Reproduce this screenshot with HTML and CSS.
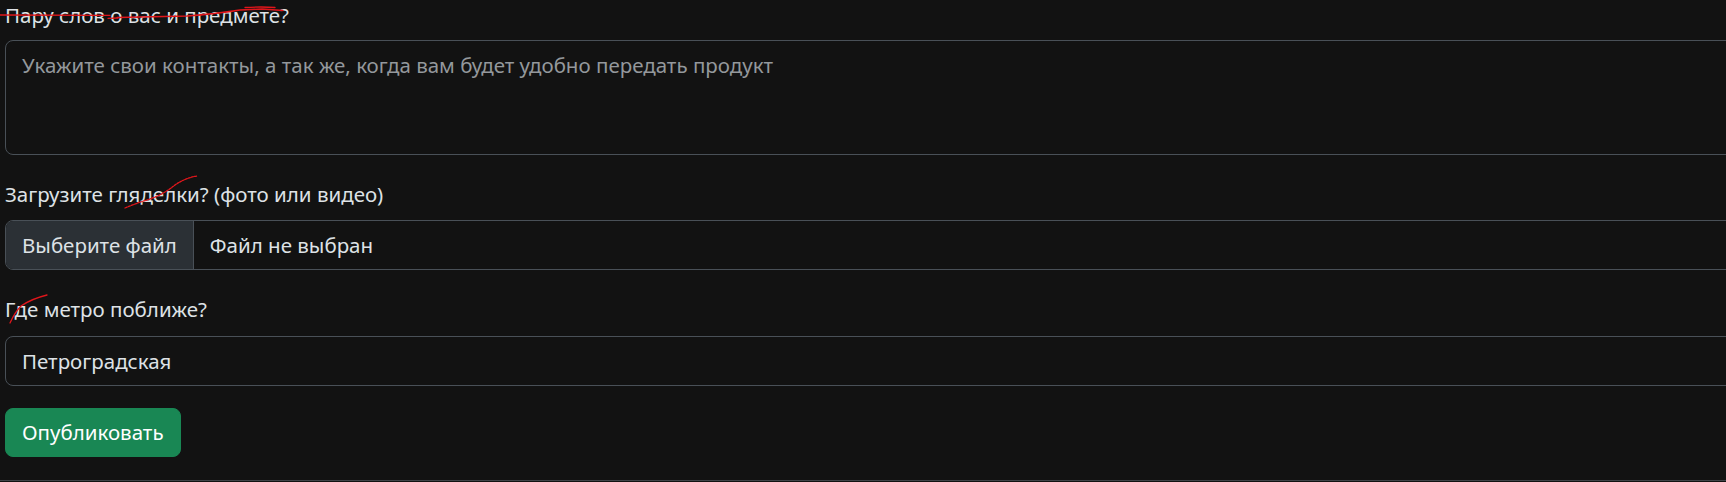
FILE: index.html
```html
<!DOCTYPE html>
<html lang="ru">
<head>
<meta charset="utf-8">
<title>Форма</title>
<link rel="stylesheet" href="styles.css">
</head>
<body>
<form class="form">
  <div class="field field-about">
    <label class="form-label" for="about">Пару слов о вас и предмете?</label>
    <textarea class="form-control textarea" id="about" placeholder="Укажите свои контакты, а так же, когда вам будет удобно передать продукт"></textarea>
    <svg class="scribble scribble-1" width="300" height="30" viewBox="0 0 300 30" aria-hidden="true">
      <path d="M0 15 L110 15.3"/>
      <path d="M108 18.3 L118 18"/>
      <path d="M117 17.5 L187 16 Q215 14 240 10 L262 9 L283 10.5"/>
      <path d="M245 7.5 Q262 6.5 275 7.5"/>
    </svg>
  </div>
  <div class="field field-files">
    <label class="form-label" for="files">Загрузите гляделки? (фото или видео)</label>
    <div class="file-input" id="files">
      <span class="file-btn">Выберите файл</span>
      <span class="file-name">Файл не выбран</span>
    </div>
    <svg class="scribble scribble-2" width="80" height="40" viewBox="0 0 80 40" aria-hidden="true">
      <path class="dotted" d="M0 38 Q12 33 22 30 Q38 25 50 15 Q60 8 72 6"/>
    </svg>
  </div>
  <div class="field field-metro">
    <label class="form-label" for="metro">Где метро поближе?</label>
    <input class="form-control" id="metro" type="text" value="Петроградская">
    <svg class="scribble scribble-3" width="50" height="34" viewBox="0 0 50 34" aria-hidden="true">
      <path d="M1 31 Q6 20 12 14 Q22 7 38 3"/>
    </svg>
  </div>
  <div class="actions">
    <button class="btn-success" type="button">Опубликовать</button>
  </div>
  <hr class="divider">
</form>
</body>
</html>
```
FILE: styles.css
```css
html, body {
  margin: 0;
  padding: 0;
  overflow: hidden;
  background: #121212;
}

body {
  font-family: "Noto Sans", "Open Sans", sans-serif;
  font-size: 20.5px;
  color: #dee2e6;
}

.form {
  display: flex;
  flex-direction: column;
  padding: 3px 0 0 5px;
  width: 1900px;
}

.field {
  position: relative;
  display: flex;
  flex-direction: column;
}

.form-label {
  display: block;
  line-height: 24px;
  margin-bottom: 13px;
  color: #dee2e6;
}

.field-files .form-label { margin-bottom: 14px; }
.field-metro .form-label { margin-bottom: 15px; }

.form-control {
  box-sizing: border-box;
  display: block;
  width: 100%;
  font-family: inherit;
  font-size: 20.5px;
  line-height: 30px;
  height: 50px;
  padding: 9px 16px;
  color: #dee2e6;
  background: #121212;
  border: 1px solid #495057;
  border-radius: 8px;
  outline: none;
  margin: 0;
}

.textarea {
  height: 115px;
  resize: none;
}

.form-control::placeholder {
  color: #94989c;
  opacity: 1;
}

.field-about { margin-bottom: 27px; }
.field-files { margin-bottom: 27px; }
.field-metro { margin-bottom: 22px; }

.file-input {
  box-sizing: border-box;
  display: flex;
  height: 50px;
  border: 1px solid #495057;
  border-radius: 8px;
  overflow: hidden;
  line-height: 30px;
}

.file-btn {
  display: flex;
  align-items: center;
  padding: 0 16px;
  background: #2b3035;
  border-right: 1px solid #495057;
  color: #dee2e6;
}

.file-name {
  display: flex;
  align-items: center;
  padding-left: 16px;
  color: #dee2e6;
}

.actions {
  display: flex;
}

.btn-success {
  box-sizing: border-box;
  height: 49px;
  padding: 8px 16px 9px;
  font-family: inherit;
  font-size: 20.5px;
  line-height: 30px;
  color: #ffffff;
  background: #198754;
  border: 1px solid #198754;
  border-radius: 8px;
  cursor: pointer;
}

.divider {
  margin: 23px 0 0 -5px;
  border: 0;
  border-top: 1px solid #3f4347;
  height: 0;
}

.scribble {
  position: absolute;
  overflow: visible;
  fill: none;
  stroke: #e0161b;
  stroke-width: 1.3;
  stroke-linecap: round;
  pointer-events: none;
}

.scribble-1 { left: -5px; top: -3px; }
.scribble-2 { left: 120px; top: -12px; }
.scribble-3 { left: 4px; top: -5px; }

.dotted { stroke-dasharray: 2 1.2; }
```
